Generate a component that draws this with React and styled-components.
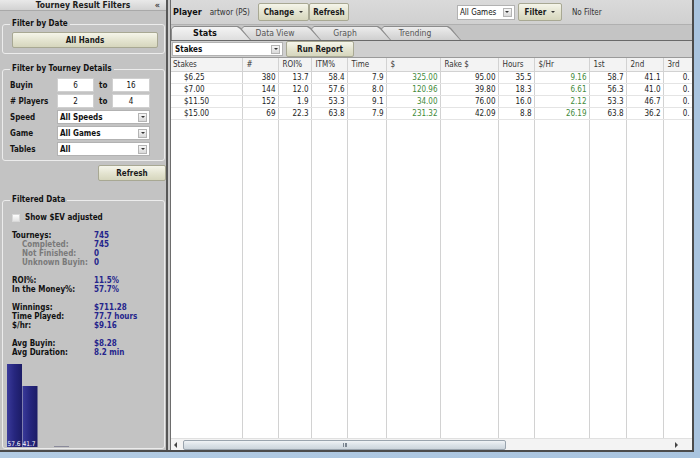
import React from 'react'
import styled, { createGlobalStyle } from 'styled-components'

const GlobalStyle = createGlobalStyle`
  html, body { margin: 0; padding: 0; overflow: hidden; }
  body { font-family: "DejaVu Sans Condensed", "DejaVu Sans", sans-serif; }
  * { box-sizing: border-box; }
`

const FONT = `"DejaVu Sans Condensed", "DejaVu Sans", sans-serif`

const columns = [
   { key: 'Stakes', w: 71, left: true },
   { key: '#', w: 36 },
   { key: 'ROI%', w: 33 },
   { key: 'ITM%', w: 36 },
   { key: 'Time', w: 39 },
   { key: '$', w: 54, green: true },
   { key: 'Rake $', w: 58 },
   { key: 'Hours', w: 36 },
   { key: '$/Hr', w: 55, green: true },
   { key: '1st', w: 37 },
   { key: '2nd', w: 37 },
   { key: '3rd', w: 29 },
]

const rows = [
   ['$6.25', '380', '13.7', '58.4', '7.9', '325.00', '95.00', '35.5', '9.16', '58.7', '41.1', '0.'],
   ['$7.00', '144', '12.0', '57.6', '8.0', '120.96', '39.80', '18.3', '6.61', '56.3', '41.0', '0.'],
   ['$11.50', '152', '1.9', '53.3', '9.1', '34.00', '76.00', '16.0', '2.12', '53.3', '46.7', '0.'],
   ['$15.00', '69', '22.3', '63.8', '7.9', '231.32', '42.09', '8.8', '26.19', '63.8', '36.2', '0.'],
]

const stats = [
   [
      { label: 'Tourneys:', value: '745' },
      { label: 'Completed:', value: '745', sub: true },
      { label: 'Not Finished:', value: '0', sub: true },
      { label: 'Unknown Buyin:', value: '0', sub: true },
   ],
   [
      { label: 'ROI%:', value: '11.5%' },
      { label: 'In the Money%:', value: '57.7%' },
   ],
   [
      { label: 'Winnings:', value: '$711.28' },
      { label: 'Time Played:', value: '77.7 hours' },
      { label: '$/hr:', value: '$9.16' },
   ],
   [
      { label: 'Avg Buyin:', value: '$8.28' },
      { label: 'Avg Duration:', value: '8.2 min' },
   ],
]

const tabs = ['Stats', 'Data View', 'Graph', 'Trending']

const Combo = ({ text, w, h, bold }) => (
   <ComboBox $w={w} $h={h} $bold={bold}>
      <span>{text}</span>
      <ComboArrow />
   </ComboBox>
)

const App = () => {
   return (
      <Window>
         <GlobalStyle />
         <Frame>
            <Sidebar>
               <SideHeader>
                  <span />
                  <span>Tourney Result Filters</span>
                  <Collapse>«</Collapse>
               </SideHeader>

               <Group $mt={8} $pb={5}>
                  <Legend>Filter by Date</Legend>
                  <Btn $w={146} $h={16} $mt={3} $ml={2}>All Hands</Btn>
               </Group>

               <Group $mt={10} $pb={4}>
                  <Legend>Filter by Tourney Details</Legend>
                  <FieldRows>
                     <FieldRow>
                        <FieldLabel>Buyin</FieldLabel>
                        <NumBox readOnly value="6" $w={37} />
                        <To>to</To>
                        <NumBox readOnly value="16" $w={38} />
                     </FieldRow>
                     <FieldRow>
                        <FieldLabel># Players</FieldLabel>
                        <NumBox readOnly value="2" $w={37} />
                        <To>to</To>
                        <NumBox readOnly value="4" $w={38} />
                     </FieldRow>
                     <FieldRow>
                        <FieldLabel>Speed</FieldLabel>
                        <Combo text="All Speeds" w={93} bold />
                     </FieldRow>
                     <FieldRow>
                        <FieldLabel>Game</FieldLabel>
                        <Combo text="All Games" w={93} bold />
                     </FieldRow>
                     <FieldRow>
                        <FieldLabel>Tables</FieldLabel>
                        <Combo text="All" w={93} bold />
                     </FieldRow>
                  </FieldRows>
               </Group>

               <RefreshRow>
                  <Btn $w={68} $h={16}>Refresh</Btn>
               </RefreshRow>

               <Group $mt={14} $pb={0} $grow>
                  <Legend>Filtered Data</Legend>
                  <CheckRow>
                     <CheckBox />
                     <span>Show $EV adjusted</span>
                  </CheckRow>
                  {stats.map((block, i) => (
                     <StatBlock key={i}>
                        {block.map((s) => (
                           <React.Fragment key={s.label}>
                              <StatLabel $sub={s.sub}>{s.label}</StatLabel>
                              <StatValue>{s.value}</StatValue>
                           </React.Fragment>
                        ))}
                     </StatBlock>
                  ))}
                  <Chart width="70" height="84" viewBox="0 0 70 84">
                     <defs>
                        <linearGradient id="bar" x1="0" x2="1" y1="0" y2="0">
                           <stop offset="0" stopColor="#3a3a9a" />
                           <stop offset="0.5" stopColor="#26267e" />
                           <stop offset="1" stopColor="#1c1c66" />
                        </linearGradient>
                     </defs>
                     <rect x="0" y="0" width="15" height="83" fill="url(#bar)" />
                     <rect x="15.5" y="22" width="15" height="61" fill="url(#bar)" />
                     <text x="0.5" y="82" fontSize="6.5" fill="#fff" fontFamily="DejaVu Sans Condensed">57.6</text>
                     <text x="15.5" y="82" fontSize="6.5" fill="#fff" fontFamily="DejaVu Sans Condensed">41.7</text>
                     <line x1="47" x2="62" y1="82.5" y2="82.5" stroke="#8a8a9a" strokeWidth="1" />
                  </Chart>
               </Group>
            </Sidebar>

            <Splitter />

            <Main>
               <TopBar>
                  <PlayerLabel>Player</PlayerLabel>
                  <PlayerName>artwor (PS)</PlayerName>
                  <BtnGroup>
                     <Btn $w={51} $h={18}>Change <Caret /></Btn>
                     <Btn $w={40} $h={18}>Refresh</Btn>
                  </BtnGroup>
                  <RightTools>
                     <Combo text="All Games" w={58} h={15} />
                     <Btn $w={44} $h={18}>Filter <Caret /></Btn>
                     <NoFilter>No Filter</NoFilter>
                  </RightTools>
               </TopBar>

               <TabRow>
                  {tabs.map((t, i) => (
                     <Tab key={t} $active={i === 0} $z={tabs.length - i}>
                        <span>{t}</span>
                     </Tab>
                  ))}
               </TabRow>

               <Toolbar>
                  <Combo text="Stakes" w={111} h={14} bold />
                  <Btn $w={68} $h={16}>Run Report</Btn>
               </Toolbar>

               <GridArea>
                  <TableWrap>
                     <Grid>
                        <colgroup>
                           {columns.map((c) => <col key={c.key} style={{ width: c.w }} />)}
                        </colgroup>
                        <thead>
                           <tr>
                              {columns.map((c) => <Th key={c.key}>{c.key}</Th>)}
                           </tr>
                        </thead>
                        <tbody>
                           {rows.map((r, ri) => (
                              <Tr key={ri}>
                                 {r.map((v, ci) => (
                                    <Td key={ci} $left={columns[ci].left} $green={columns[ci].green}>{v}</Td>
                                 ))}
                              </Tr>
                           ))}
                           <FillerRow>
                              {columns.map((c) => <Td key={c.key} />)}
                           </FillerRow>
                        </tbody>
                     </Grid>
                  </TableWrap>
                  <ScrollBar>
                     <ArrowLeft />
                     <Thumb><Grip /></Thumb>
                     <ArrowRight />
                  </ScrollBar>
               </GridArea>
            </Main>
         </Frame>
      </Window>
   )
}

const Window = styled.div`
   width: 700px;
   height: 458px;
   background: linear-gradient(90deg, #b3cce4, #a9c4df);
   font-family: ${FONT};
   color: #111;
`

const Frame = styled.div`
   width: 694px;
   height: 452px;
   display: flex;
   border-bottom: 2px solid #4b4b4b;
`

const Sidebar = styled.aside`
   width: 166px;
   flex: none;
   display: flex;
   flex-direction: column;
   background: #c3c3c3;
`

const SideHeader = styled.div`
   height: 15px;
   display: grid;
   grid-template-columns: 1fr auto 1fr;
   align-items: center;
   padding: 0 6px;
   background: linear-gradient(#e9e9e9, #d2d2d2);
   border-bottom: 1px solid #a9a9a9;
   font: bold 8.5px ${FONT};
   color: #1c1c1c;
`

const Collapse = styled.span`
   justify-self: end;
   font-size: 9px;
   color: #444;
`

const Group = styled.fieldset`
   margin: ${({ $mt }) => $mt}px 1px ${({ $grow }) => ($grow ? 1 : 0)}px 2px;
   padding: 0 6px ${({ $pb }) => $pb}px 7px;
   border: 1px solid #ececec;
   border-radius: 3px;
   min-width: 0;
   flex: ${({ $grow }) => ($grow ? 1 : 'none')};
   display: flex;
   flex-direction: column;
`

const Legend = styled.legend`
   padding: 0 2px;
   margin-left: 0;
   font: bold 8px ${FONT};
   color: #111;
   line-height: 10px;
`

const Btn = styled.button`
   width: ${({ $w }) => $w}px;
   height: ${({ $h }) => $h}px;
   margin: ${({ $mt }) => $mt || 0}px 0 0 ${({ $ml }) => $ml || 0}px;
   padding: 0;
   display: inline-flex;
   align-items: center;
   justify-content: center;
   gap: 5px;
   border: 1px solid #a8a893;
   border-radius: 2px;
   background: linear-gradient(#f5f5ea, #e3e3cf 55%, #d6d6bd);
   font: bold 8px ${FONT};
   color: #1a1a1a;
   flex: none;
`

const Caret = styled.span`
   width: 0;
   height: 0;
   border-left: 2px solid transparent;
   border-right: 2px solid transparent;
   border-top: 2px solid #333;
`

const FieldRows = styled.div`
   display: flex;
   flex-direction: column;
   gap: 2px;
   margin-top: 4px;
`

const FieldRow = styled.div`
   display: flex;
   align-items: center;
   height: 14px;
`

const FieldLabel = styled.span`
   width: 47px;
   font: bold 8px ${FONT};
   color: #141414;
`

const To = styled.span`
   width: 18px;
   padding-left: 5px;
   font: bold 8px ${FONT};
`

const NumBox = styled.input`
   width: ${({ $w }) => $w}px;
   height: 14px;
   padding: 0;
   border: 1px solid #d0d0d0;
   background: #fff;
   text-align: center;
   font: 8px ${FONT};
   color: #111;
   outline: none;
`

const ComboBox = styled.div`
   width: ${({ $w }) => $w}px;
   height: ${({ $h }) => $h || 14}px;
   display: flex;
   align-items: center;
   justify-content: space-between;
   padding: 0 2px 0 2px;
   background: #fff;
   border: 1px solid #b2b2b2;
   font: ${({ $bold }) => ($bold ? 'bold' : 'normal')} 8px ${FONT};
   color: #111;
   flex: none;
`

const ComboArrow = styled.span`
   width: 9px;
   height: 9px;
   display: flex;
   align-items: center;
   justify-content: center;
   border: 1px solid #b4b4b4;
   background: linear-gradient(#f7f7f7, #d9d9d9);
   &::after {
      content: '';
      border-left: 2px solid transparent;
      border-right: 2px solid transparent;
      border-top: 2px solid #333;
   }
`

const RefreshRow = styled.div`
   display: flex;
   justify-content: flex-end;
   padding-right: 0;
   margin-top: 4px;
`

const CheckRow = styled.div`
   display: flex;
   align-items: center;
   gap: 5px;
   margin: 8px 0 0 2px;
   font: bold 8px ${FONT};
   color: #111;
`

const CheckBox = styled.span`
   width: 8px;
   height: 8px;
   background: linear-gradient(#fdfdfd, #e2e2e2);
   border: 1px solid #d8d8d8;
`

const StatBlock = styled.div`
   display: grid;
   grid-template-columns: 82px 1fr;
   margin: 8.5px 0 0 2px;
   &:first-of-type {
      margin-top: 5px;
   }
   font: bold 8px/9.2px ${FONT};
`

const StatLabel = styled.span`
   color: ${({ $sub }) => ($sub ? '#7a7a7a' : '#111')};
   padding-left: ${({ $sub }) => ($sub ? 10 : 0)}px;
`

const StatValue = styled.span`
   color: #25258c;
`

const Chart = styled.svg`
   display: block;
   margin: 7px 0 0 -3px;
`

const Splitter = styled.div`
   width: 4px;
   flex: none;
   border-left: 2px solid #575757;
   background: #cbcbcb;
`

const Main = styled.main`
   width: 524px;
   flex: none;
   display: flex;
   flex-direction: column;
   border-left: 1px solid #6d6d6d;
   border-right: 2px solid #4b4b4b;
   background: #c6c6c6;
`

const TopBar = styled.div`
   height: 25px;
   display: flex;
   align-items: center;
   padding-left: 2px;
   background: linear-gradient(#dadada, #d0d0d0);
   border-bottom: 1px solid #b0b0b0;
`

const PlayerLabel = styled.span`
   font: bold 9px ${FONT};
   color: #111;
`

const PlayerName = styled.span`
   margin-left: 8px;
   font: 8px ${FONT};
   color: #333;
`

const BtnGroup = styled.div`
   display: flex;
   margin-left: 8px;
`

const RightTools = styled.div`
   display: flex;
   align-items: center;
   gap: 3px;
   margin-left: 108px;
`

const NoFilter = styled.span`
   margin-left: 7px;
   font: 8px ${FONT};
   color: #333;
`

const TabRow = styled.div`
   height: 16px;
   display: flex;
   align-items: flex-end;
   padding-left: 0;
   background: #c4c4c4;
   border-bottom: 1px solid #6a6a6a;
`

const Tab = styled.div`
   position: relative;
   width: 80px;
   height: 14px;
   margin-right: -10px;
   z-index: ${({ $z }) => $z};
   background: #8c8c8c;
   clip-path: polygon(0 100%, 0 3px, 3px 0, calc(100% - 13px) 0, calc(100% - 10px) 2px, 100% 100%);
   &::before {
      content: '';
      position: absolute;
      inset: 1px 1px 0 1px;
      background: ${({ $active }) =>
         $active ? 'linear-gradient(#f4f4f4, #dedede)' : 'linear-gradient(#ececec, #cfcfcf)'};
      clip-path: polygon(0 100%, 0 2px, 2px 0, calc(100% - 13px) 0, calc(100% - 10px) 2px, 100% 100%);
   }
   span {
      position: relative;
      display: block;
      padding-right: 12px;
      text-align: center;
      font: ${({ $active }) => ($active ? 'bold 9px' : '8.5px')} ${FONT};
      line-height: 14px;
      color: ${({ $active }) => ($active ? '#111' : '#555')};
   }
`

const Toolbar = styled.div`
   height: 16px;
   display: flex;
   align-items: center;
   gap: 3px;
   padding-left: 1px;
   background: #cfcfcf;
`

const GridArea = styled.div`
   flex: 1;
   display: flex;
   flex-direction: column;
   background: #fff;
   border-top: 1px solid #9a9a9a;
   min-height: 0;
`

const TableWrap = styled.div`
   flex: 1;
   overflow: hidden;
   min-height: 0;
`

const Grid = styled.table`
   width: 521px;
   height: 100%;
   table-layout: fixed;
   border-collapse: collapse;
   font: 8px ${FONT};
`

const Th = styled.th`
   height: 13px;
   padding: 0 0 0 4px;
   text-align: left;
   font-weight: normal;
   color: #333;
   background: #f3f3f3;
   border-right: 1px solid #d2d2d2;
   border-bottom: 1px solid #d2d2d2;
   white-space: nowrap;
   overflow: hidden;
   &:first-child {
      padding-left: 2px;
   }
`

const Tr = styled.tr`
   height: 12px;
`

const FillerRow = styled.tr`
   height: 100%;
`

const Td = styled.td`
   padding: ${({ $left }) => ($left ? '0 0 0 13px' : '0 2px 0 0')};
   text-align: ${({ $left }) => ($left ? 'left' : 'right')};
   color: ${({ $green }) => ($green ? '#3f8a3a' : '#1e1e1e')};
   border-right: 1px solid #d2d2d2;
   border-bottom: 1px solid #e4e4e4;
   white-space: nowrap;
   overflow: hidden;
   line-height: 11px;
   tr:last-child > & {
      border-bottom: none;
   }
`

const ScrollBar = styled.div`
   height: 12px;
   display: flex;
   align-items: center;
   padding: 0 14px 0 3px;
   background: #f3f3f3;
   border-top: 1px solid #e0e0e0;
`

const ArrowLeft = styled.span`
   width: 0;
   height: 0;
   border-top: 3px solid transparent;
   border-bottom: 3px solid transparent;
   border-right: 3px solid #444;
`

const ArrowRight = styled.span`
   width: 0;
   height: 0;
   margin-left: auto;
   border-top: 3px solid transparent;
   border-bottom: 3px solid transparent;
   border-left: 3px solid #444;
`

const Thumb = styled.div`
   width: 323px;
   height: 10px;
   margin-left: 6px;
   display: flex;
   align-items: center;
   justify-content: center;
   border: 1px solid #9aa4ae;
   border-radius: 2px;
   background: linear-gradient(#f0f3f6, #dbe2e8 50%, #cdd5dc);
`

const Grip = styled.span`
   width: 4px;
   height: 4px;
   border-left: 1px solid #7b8590;
   border-right: 1px solid #7b8590;
   background: linear-gradient(90deg, transparent 1px, #7b8590 1px, #7b8590 2px, transparent 2px);
`

export default App
